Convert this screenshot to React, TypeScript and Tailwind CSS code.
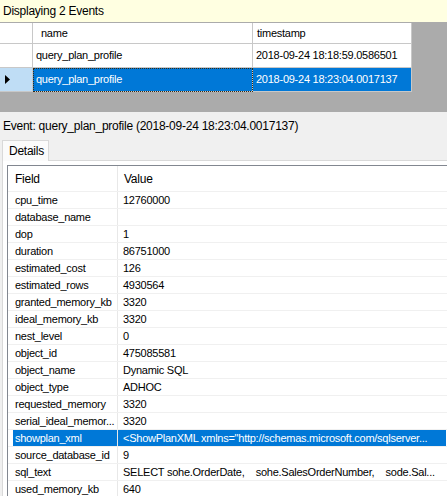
import React from 'react';

const events = [
  { name: 'query_plan_profile', timestamp: '2018-09-24 18:18:59.0586501' },
  { name: 'query_plan_profile', timestamp: '2018-09-24 18:23:04.0017137' },
];

const fields: [string, string][] = [
  ['cpu_time', '12760000'],
  ['database_name', ''],
  ['dop', '1'],
  ['duration', '86751000'],
  ['estimated_cost', '126'],
  ['estimated_rows', '4930564'],
  ['granted_memory_kb', '3320'],
  ['ideal_memory_kb', '3320'],
  ['nest_level', '0'],
  ['object_id', '475085581'],
  ['object_name', 'Dynamic SQL'],
  ['object_type', 'ADHOC'],
  ['requested_memory', '3320'],
  ['serial_ideal_memor...', '3320'],
  ['showplan_xml', '<ShowPlanXML xmlns="http://schemas.microsoft.com/sqlserver...'],
  ['source_database_id', '9'],
  ['sql_text', 'SELECT sohe.OrderDate,    sohe.SalesOrderNumber,    sode.Sal...'],
  ['used_memory_kb', '640'],
];

export default function App() {
  const selectedEvent = 1;
  const selectedField = 'showplan_xml';

  return (
    <div
      className="w-[447px] h-[496px] overflow-hidden bg-[#f0f0f0] text-black text-[11px] tracking-[-0.25px] leading-none"
      style={{ fontFamily: '"Liberation Sans", Arial, sans-serif' }}
    >
      {/* Status bar */}
      <div className="h-[22px] bg-[#ffffe1] flex items-center px-[3px] text-[12px]">Displaying 2 Events</div>

      {/* Events grid */}
      <div className="h-[90px] bg-[#ababab] pt-px">
        <div className="flex h-[21px]">
          <div className="w-[33px] bg-white border-r border-b border-[#c8c8c8]" />
          <div className="w-[220px] bg-white border-r border-b border-[#c8c8c8] flex items-center pl-[8px]">name</div>
          <div className="w-[159px] bg-white border-r border-b border-[#c8c8c8] flex items-center pl-[4px]">timestamp</div>
        </div>
        {events.map((e, i) => {
          const sel = i === selectedEvent;
          return (
            <div key={i} className="flex h-[24px]">
              <div
                className={`w-[33px] border-r border-b border-[#c8c8c8] flex items-center pl-[5px] ${
                  sel ? 'bg-[#bfddf5]' : 'bg-white'
                }`}
              >
                {sel && (
                  <svg width="5" height="9" viewBox="0 0 5 9">
                    <path d="M0 0 L5 4.5 L0 9 Z" fill="#000" />
                  </svg>
                )}
              </div>
              <div
                className={`w-[220px] border-b border-r border-[#c8c8c8] flex items-center pl-[3px] ${
                  sel
                    ? 'bg-[#0078d7] text-white outline-1 outline-dotted -outline-offset-1 outline-[#3a2a10]'
                    : 'bg-white'
                }`}
              >
                {e.name}
              </div>
              <div
                className={`w-[159px] border-b border-r border-[#c8c8c8] flex items-center pl-[3px] ${
                  sel ? 'bg-[#0078d7] text-white' : 'bg-white'
                }`}
              >
                {e.timestamp}
              </div>
            </div>
          );
        })}
      </div>

      {/* Event detail */}
      <div className="h-[28px] flex items-center px-[3px] text-[12px]">
        Event: query_plan_profile (2018-09-24 18:23:04.0017137)
      </div>

      {/* Tabs */}
      <div className="h-[20px] flex pl-[2px]">
        <div className="w-[47px] h-[21px] bg-[#fbfbfb] border border-b-0 border-[#d9d9d9] flex items-center pl-[6px] text-[12px] relative z-10">
          Details
        </div>
      </div>
      <div className="ml-[2px] bg-white border-t border-l border-[#d9d9d9] pt-[4px] pl-[4px] h-[400px]">
        <div className="border-t border-l border-[#828790] bg-white">
          <div className="flex h-[26px] border-b border-[#f0f0f0]">
            <div className="w-[110px] flex items-center pl-[7px] border-r border-[#e8e8e8] text-[12px]">Field</div>
            <div className="flex-1 flex items-center pl-[6px] text-[12px]">Value</div>
          </div>
          {fields.map(([k, v]) => {
            const sel = k === selectedField;
            return (
              <div key={k} className="flex h-[17px] border-b border-[#f0f0f0]">
                <div className="w-[110px] flex border-r border-[#e8e8e8]">
                  <div className="w-[5px] bg-white" />
                  <div className={`flex-1 flex items-center pl-[2px] ${sel ? 'bg-[#0078d7] text-white' : ''}`}>{k}</div>
                </div>
                <div
                  className={`flex-1 flex items-center pl-[5px] whitespace-pre ${
                    sel ? 'bg-[#0078d7] text-white mr-[1px]' : ''
                  }`}
                >
                  {v}
                </div>
              </div>
            );
          })}
        </div>
      </div>
    </div>
  );
}
